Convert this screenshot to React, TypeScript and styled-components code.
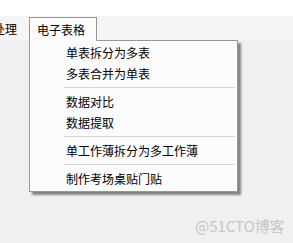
import React from "react";
import styled, { createGlobalStyle } from "styled-components";

const Global = createGlobalStyle`
  html, body { margin: 0; padding: 0; background: #f0f0f0; }
  body { font-family: "Noto Sans CJK SC", "Noto Sans", sans-serif; }
`;

const Page = styled.div`
  position: relative;
  width: 293px;
  height: 243px;
  overflow: hidden;
  background: #f0f0f0;
  font-size: 12px;
  color: #000;
`;

const TopStrip = styled.div`
  height: 16px;
  background: #ffffff;
`;

const MenuBar = styled.div`
  display: flex;
  align-items: flex-end;
  height: 24px;
  background: #f5f5f5;
`;

const BarItem = styled.div`
  width: 29px;
  height: 24px;
  line-height: 25px;
  text-indent: -7px;
  white-space: nowrap;
  overflow: hidden;
`;

const OpenTab = styled.div`
  position: relative;
  z-index: 2;
  box-sizing: border-box;
  width: 68px;
  height: 24px;
  margin-bottom: -1px;
  padding-left: 7px;
  border: 1px solid #979797;
  border-bottom: none;
  background: #fcfcfc;
  line-height: 23px;
  white-space: nowrap;
`;

const Dropdown = styled.div`
  position: absolute;
  z-index: 1;
  left: 29px;
  top: 40px;
  box-sizing: border-box;
  width: 209px;
  height: 152px;
  padding: 1px 1px 2px 1px;
  border: 1px solid #979797;
  background: #fcfcfc;
  box-shadow: 3px 3px 2px rgba(0, 0, 0, 0.45);
  display: flex;
  flex-direction: column;
`;

const Item = styled.div`
  height: 21px;
  line-height: 21px;
  padding-left: 35px;
  white-space: nowrap;
`;

const Separator = styled.div`
  height: 7px;
  display: flex;
  align-items: center;
  padding-left: 32px;
  padding-right: 1px;
  &::after {
    content: "";
    flex: 1;
    height: 1px;
    background: #d7d7d7;
  }
`;

const Watermark = styled.div`
  position: absolute;
  left: 195px;
  top: 216px;
  font-size: 15px;
  line-height: 20px;
  color: #c6c6c6;
  white-space: nowrap;
`;

type Entry = { label: string } | { sep: true };

const entries: Entry[] = [
  { label: "单表拆分为多表" },
  { label: "多表合并为单表" },
  { sep: true },
  { label: "数据对比" },
  { label: "数据提取" },
  { sep: true },
  { label: "单工作薄拆分为多工作薄" },
  { sep: true },
  { label: "制作考场桌贴门贴" },
];

export default function App() {
  return (
    <Page>
      <Global />
      <TopStrip />
      <MenuBar>
        <BarItem>处理</BarItem>
        <OpenTab>电子表格</OpenTab>
      </MenuBar>
      <Dropdown>
        {entries.map((e, i) =>
          "sep" in e ? <Separator key={i} /> : <Item key={i}>{e.label}</Item>
        )}
      </Dropdown>
      <Watermark>@51CTO博客</Watermark>
    </Page>
  );
}
